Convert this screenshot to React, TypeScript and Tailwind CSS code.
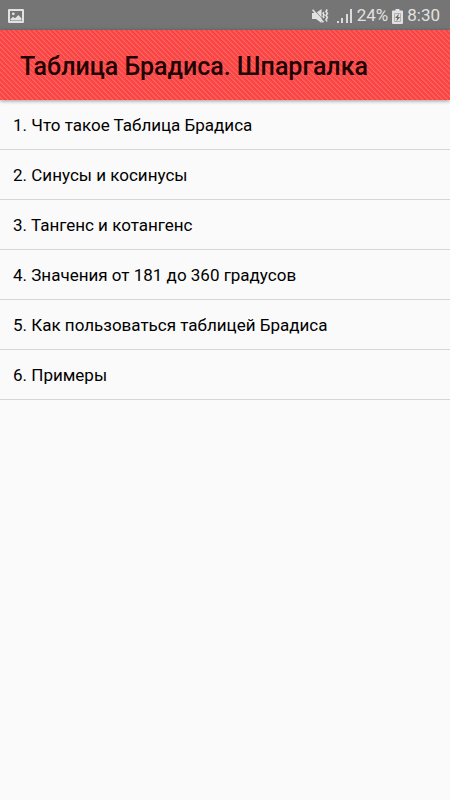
const chapters = [
  "Что такое Таблица Брадиса",
  "Синусы и косинусы",
  "Тангенс и котангенс",
  "Значения от 181 до 360 градусов",
  "Как пользоваться таблицей Брадиса",
  "Примеры",
];

function PictureIcon() {
  return (
    <svg aria-hidden viewBox="0 0 16 14" className="h-3.5 w-4" fill="#e2e2e2">
      <path
        fillRule="evenodd"
        d="M1 0h14a1 1 0 0 1 1 1v12a1 1 0 0 1-1 1H1a1 1 0 0 1-1-1V1a1 1 0 0 1 1-1Zm1 2v10h12V2H2Z"
      />
      <circle cx="5.3" cy="4.8" r="1.4" />
      <path d="M2.5 11.5V10L5 7.7l2 1.6L10.5 6l3 3.4v2.1Z" />
    </svg>
  );
}

function VibrateIcon() {
  return (
    <svg aria-hidden viewBox="0 0 17 16" className="h-4 w-[17px]" fill="#e2e2e2">
      <path d="M0 5h4l5.5-4v14L4 11H0Z" />
      <path d="M1.8 1.2 12.4 13.2" fill="none" stroke="#757575" strokeWidth="0.8" />
      <path d="M.6 1.8 11.4 14.2" fill="none" stroke="#e2e2e2" strokeWidth="1.6" />
      <path
        d="m11.7 4-.6 1.5 1 1.5-1 1.5 1 1.5M15.2 1.5l-1.2 2 1.4 2-1.4 2 1.4 2-1.4 2 1 2"
        fill="none"
        stroke="#e2e2e2"
        strokeWidth="1.6"
      />
    </svg>
  );
}

function SignalIcon() {
  return (
    <svg aria-hidden viewBox="0 0 16 15" className="h-[15px] w-4" fill="#dcdcdc">
      <rect x="0" y="12" width="2" height="2" />
      <rect x="4" y="9" width="2" height="5" />
      <rect x="9" y="5" width="2" height="9" />
      <rect x="13" y="0" width="2" height="14" />
    </svg>
  );
}

function BatteryIcon() {
  return (
    <svg aria-hidden viewBox="0 0 11 15" className="h-[15px] w-[11px]">
      <path fill="#e2e2e2" d="M3.5 0h4v1.6H10a1 1 0 0 1 1 1V14a1 1 0 0 1-1 1H1a1 1 0 0 1-1-1V2.6a1 1 0 0 1 1-1h2.5Z" />
      <path fill="none" stroke="#b0b0b0" strokeWidth="1" d="M2.5 4.5h6v8h-6Z" />
      <path fill="#6a6a6a" d="M7 4.5 3 9h2.2l-1 3.5L8.200 8H6Z" />
    </svg>
  );
}

function StatusBar() {
  return (
    <div className="flex h-[30px] items-center bg-[#757575] pt-0.5 pr-2.5 pl-2 text-[17px] text-[#e2e2e2]">
      <PictureIcon />
      <div className="ml-auto flex items-center">
        <span className="mr-2">
          <VibrateIcon />
        </span>
        <SignalIcon />
        <span className="ml-1">24%</span>
        <span className="mx-1">
          <BatteryIcon />
        </span>
        <span>8:30</span>
      </div>
    </div>
  );
}

export default function App() {
  return (
    <div className="min-h-screen bg-[#fafafa] font-['Roboto',sans-serif] text-black">
      <StatusBar />
      <header className="flex h-[70px] items-center bg-[linear-gradient(45deg,#fa4545_20%,#ff6666_30%,#fa4545_45%,#fa4545_70%,#ff6666_80%,#fa4545_95%)] bg-[length:5px_5px] px-5 pt-1 shadow-[0_1px_4px_rgba(0,0,0,0.4)]">
        <h1 className="text-[25px] font-medium text-[#210404]">Таблица Брадиса. Шпаргалка</h1>
      </header>
      <main>
        <ol>
          {chapters.map((chapter, i) => (
            <li key={chapter} className="border-b border-[#d6d6d6]">
              <a href={`#chapter-${i + 1}`} className="flex h-[49px] items-center px-[13px] pt-0.5 text-[17px]">
                {i + 1}. {chapter}
              </a>
            </li>
          ))}
        </ol>
      </main>
    </div>
  );
}
